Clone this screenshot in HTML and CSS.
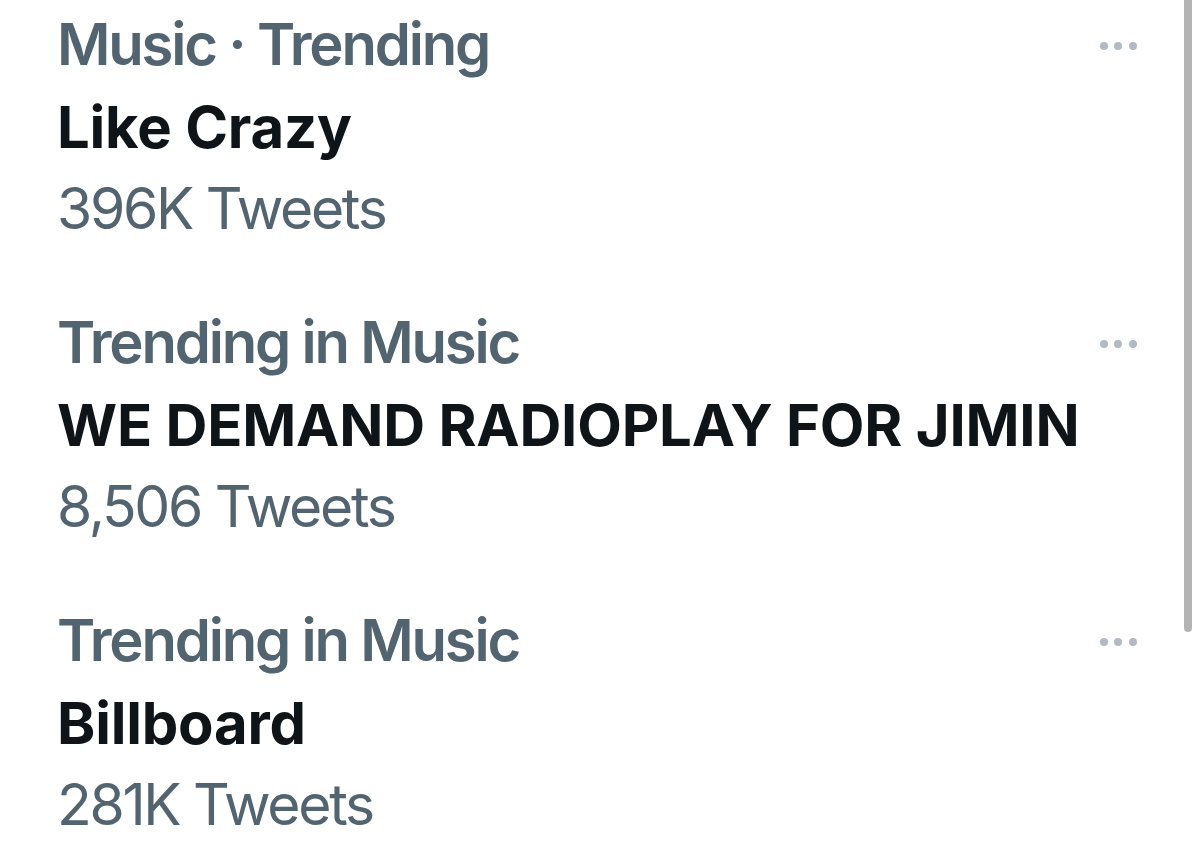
FILE: index.html
```html
<!DOCTYPE html>
<html lang="en">
<head>
  <meta charset="UTF-8">
  <meta name="viewport" content="width=device-width, initial-scale=1.0">
  <title>Trends</title>
  <link rel="stylesheet" href="styles.css">
</head>
<body>
  <!-- trend list -->
  <ul class="trends">
    <li class="trend">
      <div class="trend-text">
        <div class="trend-context">Music · Trending</div>
        <div class="trend-name">Like Crazy</div>
        <div class="trend-count">396K Tweets</div>
      </div>
      <button class="trend-more" aria-label="More">
        <svg width="40" height="82" viewBox="0 0 40 82"><circle cx="6" cy="41" r="4"/><circle cx="20" cy="41" r="4"/><circle cx="35" cy="41" r="4"/></svg>
      </button>
    </li>
    <li class="trend">
      <div class="trend-text">
        <div class="trend-context">Trending in Music</div>
        <div class="trend-name">WE DEMAND RADIOPLAY FOR JIMIN</div>
        <div class="trend-count">8,506 Tweets</div>
      </div>
      <button class="trend-more" aria-label="More">
        <svg width="40" height="82" viewBox="0 0 40 82"><circle cx="6" cy="41" r="4"/><circle cx="20" cy="41" r="4"/><circle cx="35" cy="41" r="4"/></svg>
      </button>
    </li>
    <li class="trend">
      <div class="trend-text">
        <div class="trend-context">Trending in Music</div>
        <div class="trend-name">Billboard</div>
        <div class="trend-count">281K Tweets</div>
      </div>
      <button class="trend-more" aria-label="More">
        <svg width="40" height="82" viewBox="0 0 40 82"><circle cx="6" cy="41" r="4"/><circle cx="20" cy="41" r="4"/><circle cx="35" cy="41" r="4"/></svg>
      </button>
    </li>
  </ul>

  <!-- scroll indicator -->
  <div class="scroll-thumb"></div>
</body>
</html>
```

FILE: styles.css
```css
body {
  margin: 0;
  background: #fff;
  font-family: Inter, "Liberation Sans", sans-serif;
  overflow: hidden;
}

.trends {
  list-style: none;
  margin: 0;
  padding: 2px 62px 0 57px;
}

.trend {
  display: flex;
  justify-content: space-between;
  align-items: flex-start;
  margin-bottom: 50px;
}

.trend-text {
  font-size: 58px;
  line-height: 82px;
}

.trend-context {
  color: #536471;
  font-weight: 600;
  letter-spacing: -2.2px;
  line-height: 84px;
}

.trend-name {
  color: #0f1419;
  font-weight: 700;
  letter-spacing: -0.2px;
}

.trend-count {
  color: #536471;
  font-weight: 400;
  font-size: 57px;
  letter-spacing: -2.3px;
}

.trend-more {
  border: 0;
  background: none;
  padding: 0;
  margin-top: 3px;
  fill: #b1bac4;
}

.trend-more svg {
  display: block;
}

.scroll-thumb {
  position: absolute;
  top: 0;
  right: 8px;
  width: 8px;
  height: 632px;
  background: #b4b4b4;
  border-radius: 0 0 4px 4px;
}
```
